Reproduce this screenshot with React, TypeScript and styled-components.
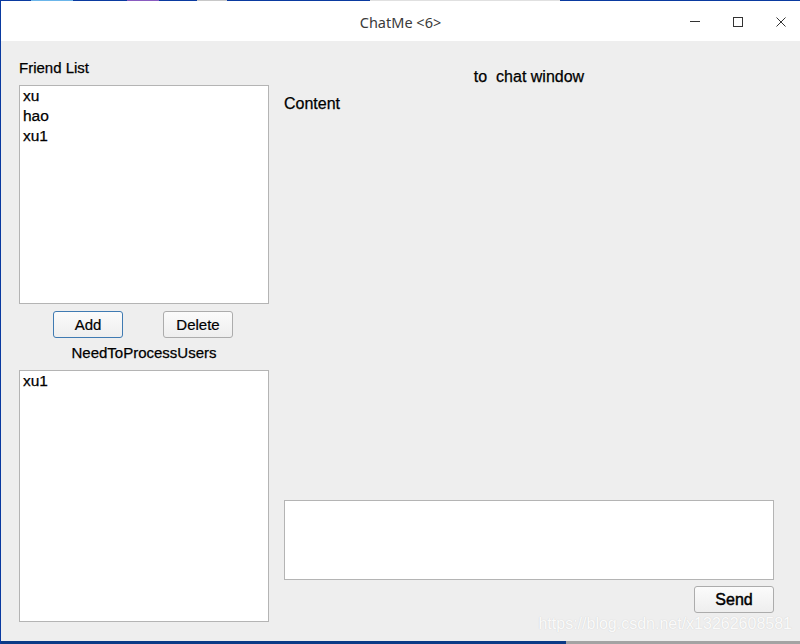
import React from "react";
import styled, { createGlobalStyle } from "styled-components";

const GlobalStyle = createGlobalStyle`
  html, body {
    margin: 0;
    padding: 0;
    background: #eeeeee;
  }
  body {
    font-family: "Liberation Sans", Arial, sans-serif;
    color: #000;
  }
`;

const Window = styled.div`
  position: relative;
  width: 800px;
  height: 644px;
  display: flex;
  flex-direction: column;
  overflow: hidden;
  background: #eeeeee;
`;

const DesktopStrip = styled.div`
  height: 1px;
  flex: none;
  background: linear-gradient(
    to right,
    #0a3aa0 0,
    #0a3aa0 31px,
    #6bb6ea 31px,
    #6bb6ea 73px,
    #0a3aa0 73px,
    #0a3aa0 127px,
    #8a5cc0 127px,
    #8a5cc0 159px,
    #0a3aa0 159px,
    #0a3aa0 197px,
    #c8c8c8 197px,
    #c8c8c8 227px,
    #0a3aa0 227px,
    #0a3aa0 370px,
    #e0e0e0 370px,
    #e0e0e0 560px,
    #0a3aa0 560px
  );
`;

const Frame = styled.div`
  flex: 1;
  display: flex;
  flex-direction: column;
  border-left: 1px solid #0a3aa0;
  min-height: 0;
`;

const TitleBar = styled.div`
  height: 40px;
  flex: none;
  background: #ffffff;
  display: grid;
  grid-template-columns: 1fr auto 1fr;
  align-items: center;
`;

const Title = styled.div`
  grid-column: 2;
  font-family: "Noto Sans", "Open Sans", sans-serif;
  font-size: 14.5px;
  color: #3a3a3a;
  padding-top: 2px;
`;

const Controls = styled.div`
  grid-column: 3;
  justify-self: end;
  display: flex;
  align-items: center;
  gap: 33px;
  padding-right: 14px;
  padding-top: 1px;
`;

const ControlIcon = styled.svg`
  width: 10px;
  height: 10px;
  display: block;
  stroke: #333333;
  stroke-width: 1;
  fill: none;
  shape-rendering: crispEdges;
`;

const Body = styled.div`
  flex: 1;
  display: flex;
  padding-left: 18px;
  gap: 15px;
  min-height: 0;
`;

const LeftColumn = styled.div`
  width: 250px;
  display: flex;
  flex-direction: column;
  padding: 17px 0 19px;
`;

const RightColumn = styled.div`
  width: 490px;
  display: flex;
  flex-direction: column;
  padding: 26px 0 28px;
`;

const Label = styled.div<{ $size?: number; $center?: boolean }>`
  font-size: ${(p) => p.$size ?? 15}px;
  line-height: 20px;
  height: 20px;
  white-space: pre;
  text-align: ${(p) => (p.$center ? "center" : "left")};
  -webkit-text-stroke: 0.25px #000;
`;

const ListBox = styled.div<{ $height?: number }>`
  box-sizing: border-box;
  background: #ffffff;
  border: 1px solid #b4b4b4;
  padding: 0 0 0 3px;
  ${(p) => (p.$height ? `height: ${p.$height}px; flex: none;` : "flex: 1;")}
`;

const ListItem = styled.div`
  font-size: 15.5px;
  line-height: 20px;
  height: 20px;
  -webkit-text-stroke: 0.25px #000;
`;

const ButtonRow = styled.div`
  display: flex;
  justify-content: center;
  gap: 40px;
  margin: 7px 0 5px;
  padding-right: 2px;
`;

const PushButton = styled.button<{ $focused?: boolean; $width: number; $size?: number }>`
  box-sizing: border-box;
  width: ${(p) => p.$width}px;
  height: 27px;
  padding: 0;
  border: 1px solid ${(p) => (p.$focused ? "#3f7ab2" : "#acacac")};
  border-radius: 3px;
  background: linear-gradient(#fbfbfb, #eeeeee);
  font-family: "Liberation Sans", Arial, sans-serif;
  font-size: ${(p) => p.$size ?? 15}px;
  color: #000;
  -webkit-text-stroke: ${(p) => (p.$size ? "0.45px" : "0.2px")} #000;
`;

const Spacer = styled.div`
  flex: 1;
`;

const InputBox = styled.div`
  box-sizing: border-box;
  height: 80px;
  flex: none;
  background: #ffffff;
  border: 1px solid #b4b4b4;
`;

const SendRow = styled.div`
  display: flex;
  justify-content: flex-end;
  margin-top: 6px;
`;

const BottomStrip = styled.div`
  height: 3px;
  flex: none;
  display: flex;
`;

const StripPart = styled.div<{ $color: string; $width?: number }>`
  background: ${(p) => p.$color};
  ${(p) => (p.$width ? `width: ${p.$width}px;` : "flex: 1;")}
`;

const Watermark = styled.div`
  position: absolute;
  right: 8px;
  bottom: 11px;
  font-family: "Liberation Sans", Arial, sans-serif;
  font-size: 16px;
  color: rgba(255, 255, 255, 0.92);
  text-shadow: 0 0 1px rgba(120, 120, 120, 0.3);
`;

export default function App() {
  return (
    <>
      <GlobalStyle />
      <Window>
        <DesktopStrip />
        <Frame>
          <TitleBar>
            <Title>ChatMe &lt;6&gt;</Title>
            <Controls>
              <ControlIcon viewBox="0 0 10 10">
                <line x1="0" y1="4.5" x2="10" y2="4.5" />
              </ControlIcon>
              <ControlIcon viewBox="0 0 10 10">
                <rect x="0.5" y="0.5" width="9" height="8.5" />
              </ControlIcon>
              <ControlIcon viewBox="0 0 10 10" style={{ shapeRendering: "auto" }}>
                <path d="M0.5 0.5 L9.5 9.5 M9.5 0.5 L0.5 9.5" />
              </ControlIcon>
            </Controls>
          </TitleBar>
          <Body>
            <LeftColumn>
              <Label>Friend List</Label>
              <ListBox $height={219} style={{ marginTop: 7 }}>
                <ListItem>xu</ListItem>
                <ListItem>hao</ListItem>
                <ListItem>xu1</ListItem>
              </ListBox>
              <ButtonRow>
                <PushButton $focused $width={70}>
                  Add
                </PushButton>
                <PushButton $width={70}>Delete</PushButton>
              </ButtonRow>
              <Label $center>NeedToProcessUsers</Label>
              <ListBox style={{ marginTop: 7 }}>
                <ListItem>xu1</ListItem>
              </ListBox>
            </LeftColumn>
            <RightColumn>
              <Label $size={16} $center>
                {"to  chat window"}
              </Label>
              <Label $size={16} style={{ marginTop: 7 }}>
                Content
              </Label>
              <Spacer />
              <InputBox />
              <SendRow>
                <PushButton $width={80} $size={16}>
                  Send
                </PushButton>
              </SendRow>
            </RightColumn>
          </Body>
          <BottomStrip>
            <StripPart $color="#0b3a86" $width={565} />
            <StripPart $color="#a3a3a3" />
          </BottomStrip>
        </Frame>
        <Watermark>https://blog.csdn.net/x13262608581</Watermark>
      </Window>
    </>
  );
}
